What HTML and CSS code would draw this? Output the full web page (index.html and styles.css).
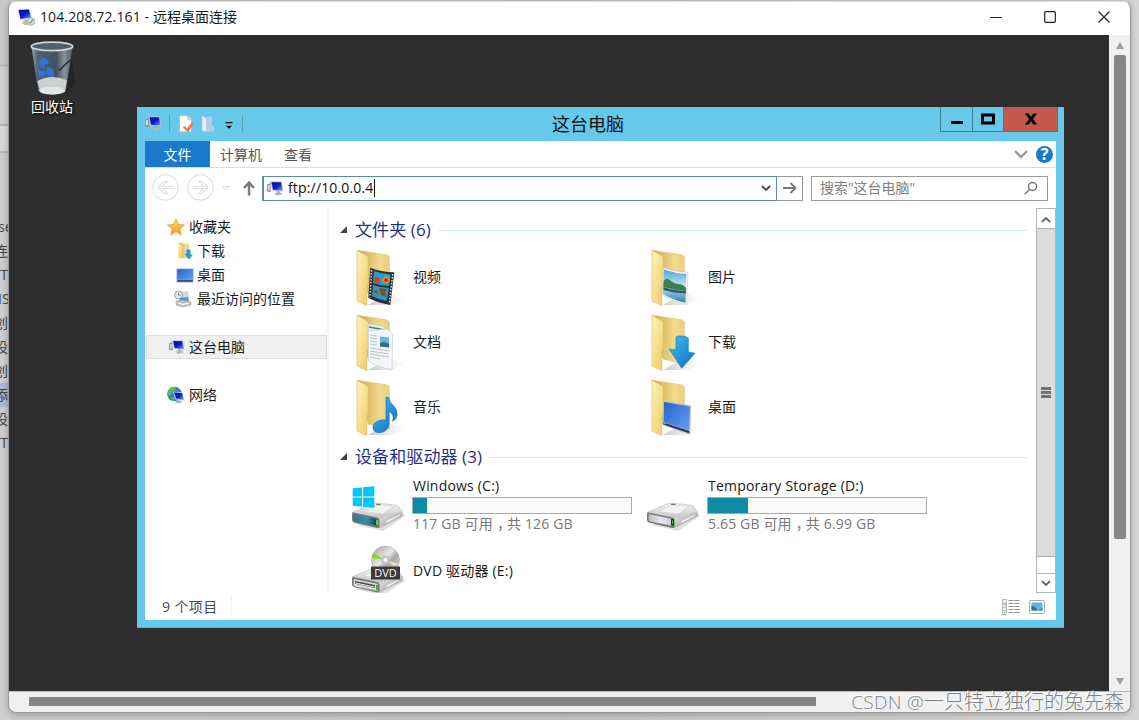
FILE: index.html
```html
<!DOCTYPE html>
<html lang="zh-CN">

<head>
	<meta charset="utf-8">
	<title>远程桌面连接</title>
	<link rel="stylesheet" href="styles.css">
</head>

<body>
	<!-- shared icons -->
	<svg class="sprite" width="0" height="0">
		<defs>
			<linearGradient id="flap" x1="0" y1="0" x2="1" y2="1">
				<stop offset="0" stop-color="#fff3bd" />
				<stop offset="1" stop-color="#eecb62" />
			</linearGradient>
			<linearGradient id="back" x1="0" y1="0" x2="1" y2="0">
				<stop offset="0" stop-color="#c9a552" />
				<stop offset=".7" stop-color="#f2da8c" />
				<stop offset="1" stop-color="#ead07f" />
			</linearGradient>
			<linearGradient id="shade" x1="0" y1="0" x2="1" y2="0">
				<stop offset="0" stop-color="#aaa" stop-opacity=".65" />
				<stop offset="1" stop-color="#ccc" stop-opacity="0" />
			</linearGradient>
			<linearGradient id="blue" x1="0" y1="0" x2="1" y2="1">
				<stop offset="0" stop-color="#49bdf0" />
				<stop offset="1" stop-color="#0a6fbd" />
			</linearGradient>
			<linearGradient id="screen" x1="0" y1="0" x2="1" y2="1">
				<stop offset="0" stop-color="#2a5fc4" />
				<stop offset="1" stop-color="#5fa4f8" />
			</linearGradient>
			<linearGradient id="monitor" x1="0" y1="0" x2="1" y2="1">
				<stop offset="0" stop-color="#0a10a0" />
				<stop offset=".5" stop-color="#0818c4" />
				<stop offset="1" stop-color="#6f9cf0" />
			</linearGradient>
			<linearGradient id="metal" x1="0" y1="0" x2="0" y2="1">
				<stop offset="0" stop-color="#f4f4f4" />
				<stop offset="1" stop-color="#c2c2c2" />
			</linearGradient>
			<linearGradient id="metalSide" x1="0" y1="0" x2="1" y2="1">
				<stop offset="0" stop-color="#f0f0f0" />
				<stop offset="1" stop-color="#8c8c8c" />
			</linearGradient>
			<linearGradient id="teal" x1="0" y1="0" x2="1" y2="0">
				<stop offset="0" stop-color="#3d6f8e" />
				<stop offset=".55" stop-color="#2796a6" />
				<stop offset="1" stop-color="#123348" />
			</linearGradient>
			<linearGradient id="silver" x1="0" y1="0" x2="1" y2="0">
				<stop offset="0" stop-color="#b9bac4" />
				<stop offset=".5" stop-color="#e6e6ee" />
				<stop offset="1" stop-color="#c8c9d4" />
			</linearGradient>
			<linearGradient id="disc" x1="0" y1="0" x2="1" y2="1">
				<stop offset="0" stop-color="#999" />
				<stop offset=".45" stop-color="#e8e8e8" />
				<stop offset=".6" stop-color="#aaa" />
				<stop offset="1" stop-color="#ddd" />
			</linearGradient>
			<linearGradient id="star" x1="0" y1="0" x2="0" y2="1">
				<stop offset="0" stop-color="#ffe36a" />
				<stop offset="1" stop-color="#f5922a" />
			</linearGradient>
			<linearGradient id="bin" x1="0" y1="0" x2="1" y2="0">
				<stop offset="0" stop-color="#a0a9b0" />
				<stop offset=".15" stop-color="#4f6272" />
				<stop offset=".6" stop-color="#42515e" />
				<stop offset=".8" stop-color="#8a9197" />
				<stop offset="1" stop-color="#565b60" />
			</linearGradient>
			<linearGradient id="sky" x1="0" y1="0" x2="0" y2="1">
				<stop offset="0" stop-color="#4d9fe0" />
				<stop offset=".5" stop-color="#c8e6f5" />
				<stop offset="1" stop-color="#2e7ea5" />
			</linearGradient>
		</defs>
		<symbol id="pc" viewBox="0 0 16 16">
			<path d="M0 4.500 3.500 2.500v9L0 10.500z" fill="#858b90" />
			<path d="M.8 5.200 2.800 4.300v5.300l-2 .2z" fill="#d9dcdf" />
			<path d="M3.300 1.200 13.900 1.400 15.400 10.800 5 10z" fill="#b9c4d8" />
			<path d="M4.200 2 13.200 2.200l1.300 7.700-8.700-.8z" fill="url(#monitor)" />
			<path d="M8.600 10.400l3.400.3.600 2-3.400-.4z" fill="#a5a9ad" />
			<path d="M6.600 12.400l6-.7 2.600 1.600-6 1.600z" fill="#b5b9bd" />
		</symbol>
		<symbol id="folder" viewBox="0 0 50 60">
			<path d="M12 57 33 45 50 51 36 57z" fill="url(#shade)" />
			<path d="M1 2.2 31.500 7 33.300 8.800V51L12 46z" fill="url(#back)" stroke="#dcc070" stroke-width=".6" />
			<path d="M1 2.200 11.400 8 12.300 10v26l-1.500 2v19.500L1 53z" fill="url(#flap)" stroke="#d8b85c" stroke-width=".6" />
		</symbol>
		<symbol id="drive" viewBox="0 0 56 50">
			<path d="M6 42 53 30 55 33 33 48z" fill="#999" opacity=".3" />
			<path d="M2 29.500 22 21q2-1 4-.9L45 22q2 .2 3.500 1.500L52.500 29 29.500 36z" fill="url(#metal)" stroke="#aaa" stroke-width=".5" />
			<path d="M13 28.500 28 22l16 1.500L33 31z" fill="#f3f3f3" stroke="#ccc" stroke-width=".5" />
			<path d="M26 20.800h4l1 1.200h-5z" fill="#777" />
			<path d="M29 35.500 52.500 29v4.200L31 44.800 28 45z" fill="url(#metalSide)" />
			<path d="M36 38 50 31.500v1L37 40z" fill="#eee" />
			<path d="M3.500 29.500 27 34.500q2.500.6 2.500 2.500v6.500q0 1.800-2.500 1.500L4.500 39.800Q2 39 2 37v-6q0-1.700 1.500-1.500z" fill="#777" />
		</symbol>
	</svg>

	<div class="background">
		<div class="outline">
			<span>se</span>
			<span class="shift">连接</span>
			<span class="half">FT</span>
			<span>IS</span>
			<span class="shift">创</span>
			<span class="shift">设</span>
			<span class="shift">创</span>
			<span class="shift current">添</span>
			<span class="shift">设</span>
			<span class="half">FT</span>
		</div>
	</div>

	<div class="rdp">
		<header class="rdp-title">
			<svg class="rdp-icon" viewBox="0 0 18 18">
				<path d="M.5 1 13 .5l2.500 10L3 12z" fill="#dde2ea" />
				<path d="M1.500 2 12 1.500l2 8L3.500 11z" fill="url(#monitor)" />
				<path d="M7 12l3-.5 1 2.500 3 1-5 2.500-4-2z" fill="#b9bdc1" />
				<circle cx="14" cy="13.500" r="3.800" fill="#d5dcd6" stroke="#9aa59c" stroke-width=".7" />
				<path d="M12 14l1.500 1L16 11.500" stroke="#3a9a48" fill="none" />
			</svg>
			<h1><span>104.208.72.161 - </span>远程桌面连接</h1>
			<div class="rdp-buttons">
				<svg viewBox="0 0 14 14"><path d="M1 7.500h12" /></svg>
				<svg viewBox="0 0 14 14"><rect x="1.700" y="1.700" width="10.600" height="10.600" rx="1" /></svg>
				<svg viewBox="0 0 14 14"><path d="M1.500 1.500l11 11M12.500 1.500l-11 11" /></svg>
			</div>
		</header>

		<div class="rdp-view">
			<div class="desktop">
				<div class="bin">
					<svg viewBox="0 0 48 58">
						<path d="M36 50 44 20l4 25-8 8z" fill="#111" opacity=".3" />
						<path d="M3 6 45 6 38 52q-14 6-28 0z" fill="url(#bin)" />
						<path d="M9 42q14-8 30-1l-2 12q-12 5-25 0z" fill="#cdd0d2" />
						<ellipse cx="24" cy="51.500" rx="13" ry="4" fill="#e5e5e5" />
						<path d="M31 31 43 20" stroke="#25303a" stroke-width="1.500" />
						<path d="M10 24l4-6 5 1 2 5-4 1-2 4zM20 27l4 2 3 7-5 2-2-3-3-1zM9 28l4 4 4-1-1 7-6-2z" fill="#2f73dc" />
						<ellipse cx="24" cy="6.500" rx="21" ry="4.300" fill="#51606c" stroke="#d3d6d8" stroke-width="1.800" />
					</svg>
					<p>回收站</p>
				</div>

				<div class="explorer">
					<div class="caption">
						<div class="quick">
							<svg class="icon16"><use href="#pc" /></svg>
							<i class="sep"></i>
							<svg class="quick-doc" viewBox="0 0 16 18">
								<path d="M1.500.8h8l4 4v12h-12z" fill="#fff" stroke="#a7b7c0" stroke-width=".7" />
								<path d="M9.500.8v4h4" fill="#ddd" stroke="#aaa" stroke-width=".5" />
								<path d="M5 12.500l2-1.500 2 2.500L14 7l1.500 2-5.500 8.500z" fill="#ec7b3f" />
							</svg>
							<svg class="quick-folder" viewBox="0 0 14 18">
								<path d="M4 2l7-.5v9l2 1v5L5 17z" fill="#b7cbe0" />
								<path d="M1 .8 5.500 3v14L1 15.500z" fill="#e4edf6" stroke="#a9bfd0" stroke-width=".5" />
							</svg>
							<svg class="quick-more" viewBox="0 0 8 8"><path d="M.5 0h7v1.200h-7zM1 3.800h6l-3 3z" /></svg>
							<i class="sep"></i>
						</div>
						<h2>这台电脑</h2>
						<div class="caption-buttons">
							<button class="min"><svg viewBox="0 0 14 12"><path d="M1 8h12v3H1z" /></svg></button>
							<button class="max"><svg viewBox="0 0 14 12"><path d="M0 .5h14v11H0zM3 3.500v5h8v-5z" fill-rule="evenodd" /></svg></button>
							<button class="close"><svg viewBox="0 0 14 12"><path d="M1 .5h3.700L7 3.800 9.300.5H13L9 6l4 5.500H9.300L7 8.200l-2.300 3.300H1L5 6z" /></svg></button>
						</div>
					</div>

					<div class="client">
						<nav class="ribbon">
							<a class="active">文件</a>
							<a>计算机</a>
							<a>查看</a>
							<div class="ribbon-right">
								<svg class="expand" viewBox="0 0 14 9"><path d="M1 1l6 6 6-6" /></svg>
								<span class="help">?</span>
							</div>
						</nav>

						<div class="address-row">
							<svg class="round" viewBox="0 0 26 26"><circle cx="13" cy="13" r="12.200" /><path d="M5.500 13l6.500-6h3l-5 5h9.500v2H10l5 5h-3z" /></svg>
							<svg class="round next" viewBox="0 0 26 26"><circle cx="13" cy="13" r="12.200" /><path d="M20.500 13 14 7h-3l5 5H6.500v2H16l-5 5h3z" /></svg>
							<svg class="history" viewBox="0 0 8 5"><path d="M.7.6h6.600L4 4.200z" /></svg>
							<svg class="up" viewBox="0 0 14 16"><path d="M7 15.500V3M2 8l5-5.500L12 8" /></svg>
							<div class="address">
								<svg class="icon16"><use href="#pc" /></svg>
								<span>ftp://10.0.0.4</span><i class="caret"></i>
								<svg class="drop" viewBox="0 0 10 7"><path d="M1 1l4 4 4-4" /></svg>
							</div>
							<div class="go"><svg viewBox="0 0 14 12"><path d="M0 6h12M7.500 1l5 5-5 5" /></svg></div>
							<div class="search">
								<span>搜索"这台电脑"</span>
								<svg viewBox="0 0 14 14"><circle cx="8.500" cy="5.500" r="4" /><path d="M5.500 8.500.8 13" /></svg>
							</div>
						</div>

						<div class="body">
							<ul class="tree">
								<li>
									<svg viewBox="0 0 18 18"><path d="M9 1l2.400 5.500 6 .5-4.600 4 1.500 6L9 13.800 3.700 17l1.500-6L.6 7l6-.5z" fill="url(#star)" stroke="#e39a2c" stroke-width=".8" /></svg>
									收藏夹
								</li>
								<li class="sub">
									<svg viewBox="0 0 18 18">
										<path d="M2 .8l11 1v15L6 16z" fill="url(#back)" />
										<path d="M2 .8l4 2.500v14L2 15.500z" fill="url(#flap)" />
										<path d="M10.500 7.500h4v5H17l-4 5-4.500-5.500h2z" fill="#2c97db" />
									</svg>
									下载
								</li>
								<li class="sub">
									<svg viewBox="0 0 18 18"><path d="M.5 2.500h17v14H.5z" fill="#8fa8c6" /><path d="M1.300 3.300h15.400v10.400H1.300z" fill="url(#screen)" /><path d="M1.300 14h15.400v1.700H1.300z" fill="#304e79" /></svg>
									桌面
								</li>
								<li class="sub recent">
									<svg viewBox="0 0 18 18">
										<path d="M5 2l9-1 1 7-9 1z" fill="#d3d8dc" />
										<circle cx="4.500" cy="5" r="4" fill="#e1e8ec" stroke="#9ba7ae" />
										<path d="M4.500 2.500V5h2" stroke="#66747c" fill="none" stroke-width=".8" />
										<path d="M5 8l9-1 1 5-8 1z" fill="#4d9bcd" />
										<path d="M2 11l7-1 8 2v3l-8 2-7-2z" fill="#bdc4c8" stroke="#8b9499" stroke-width=".5" />
										<path d="M4 13l5 1.500 6-1.500" stroke="#fff" fill="none" />
									</svg>
									最近访问的位置
								</li>
								<li class="selected">
									<svg class="small"><use href="#pc" /></svg>
									这台电脑
								</li>
								<li class="network">
									<svg viewBox="0 0 18 18">
										<circle cx="7.500" cy="8" r="7.300" fill="#3684c5" />
										<path d="M2 3.500Q5 0 9 1.500L8 4 5 5.500 4 9 1 10Q0 6 2 3.500zM3 12l4-1 1 4z" fill="#5dba54" />
										<path d="M6 5.500l9.500.7 2.200 8.500-9-1.200z" fill="#ccd8e8" />
										<path d="M7 6.500l8 .6 1.600 6.600-7.200-1z" fill="url(#monitor)" />
										<path d="M10 14l3.500.4 2 1.800-4 1.300-4-1.500z" fill="#b1b7bb" />
									</svg>
									网络
								</li>
							</ul>

							<main class="files">
								<h3><i class="tri"></i>文件夹 (6)</h3>
								<div class="grid folders">
									<div class="item">
										<svg class="folder" viewBox="0 0 50 60">
											<use href="#folder" />
											<path d="M14.300 19.700Q25 24 38.300 24.300L34.300 57Q22 55 12.300 50z" fill="#29313a" />
											<path d="M18 23q8 3 16.500 3.500L33 38q-9-.6-16-3z" fill="#2a9dd0" />
											<path d="M17 37q8 2.500 16 3L30.500 53Q23 52 16 48z" fill="#3c91b8" />
											<path d="M19 28l4 2 1 6-6-2z" fill="#d63f2d" />
											<circle cx="30" cy="32" r="3.800" fill="#e28622" />
											<circle cx="30" cy="32" r="1.500" fill="#5b2a18" />
											<path d="M23 40l8 1-2 3 1 5-5-2zM17 43l4-1 1 5z" fill="#77522a" />
											<path d="M15.600 22 14 49.500M36.700 26 33.300 55" stroke="#ddd" stroke-width="1.400" stroke-dasharray="1.600 1.400" fill="none" />
										</svg>
										<span>视频</span>
									</div>
									<div class="item">
										<svg class="folder" viewBox="0 0 50 60">
											<use href="#folder" />
											<path d="M12.300 19.700Q24 24 36.900 24.300L35.700 56.500Q23 54 11.500 47z" fill="#f4f6f8" stroke="#c5cbd0" stroke-width=".6" />
											<path d="M12.800 21.500Q24 25.500 35.300 25.900L34.400 54.700Q22 52 12.200 46z" fill="url(#sky)" />
											<path d="M12.600 33q3-4 6-1 5 4 9 4 4 0 7.500 4v3q-12-1-22.800-4z" fill="#3d7f48" />
											<path d="M12.500 39q11 4 22.300 4v2.500Q22 45 12.400 42z" fill="#216080" />
										</svg>
										<span>图片</span>
									</div>
									<div class="item">
										<svg class="folder" viewBox="0 0 50 60">
											<use href="#folder" />
											<path d="M12.300 11 27 13l6 6v27l-20-2z" fill="#e9eef3" stroke="#b9c1c9" stroke-width=".5" />
											<path d="M13 14l16 3" stroke="#338b85" stroke-width="1.300" />
											<path d="M12.300 18 31 16q3 1 5.700 5L36 57Q22 54 12.300 48z" fill="#f3f5fa" stroke="#c2c8d2" stroke-width=".6" />
											<path d="M24 23.500l9 1v10l-9-1z" fill="#69b4dd" />
											<path d="M24 30l4-1 5 2v3.500l-9-1z" fill="#356f78" />
											<path d="M14 22l7 1M14 25l7 1M14 28l7 1M14 31l7 1M14 35l19 3M14 38l19 3M14 41l19 3M14 44l10 2" stroke="#b4bcc9" stroke-width=".9" />
										</svg>
										<span>文档</span>
									</div>
									<div class="item">
										<svg class="folder" viewBox="0 0 50 60">
											<use href="#folder" />
											<path d="M25 24q2-1.500 5-1 5 0 7.300 2.300V39l6.700 1.300L30.700 55.300 18.300 36.300l6.700.5z" fill="url(#blue)" stroke="#1a7cbd" stroke-width=".7" />
										</svg>
										<span>下载</span>
									</div>
									<div class="item">
										<svg class="folder" viewBox="0 0 50 60">
											<use href="#folder" />
											<path d="M30 19.300h2.500q1 5 5 8.500 4.500 4.500 3.500 9.500-.7 4-4.500 6 2.500-6-3.500-10.300V46q-.5 6.500-7 8.300-8 1.500-9-4-.3-6 7-8 4-1 6 .2z" fill="url(#blue)" stroke="#1a76b5" stroke-width=".7" />
										</svg>
										<span>音乐</span>
									</div>
									<div class="item">
										<svg class="folder" viewBox="0 0 50 60">
											<use href="#folder" />
											<path d="M12 22.500 40 27.500 39.300 57 11.500 47z" fill="#b9c0c8" />
											<path d="M13 24 38.800 28.600 38.200 52.500 12.700 44z" fill="url(#screen)" />
											<path d="M12.500 44.500 38.200 53v2.300L12.300 46.500z" fill="#253a4f" />
											<circle cx="13.800" cy="45.500" r="1" fill="#6fc04a" />
										</svg>
										<span>桌面</span>
									</div>
								</div>

								<h3 class="second"><i class="tri"></i>设备和驱动器 (3)</h3>
								<div class="grid drives">
									<div class="item">
										<svg class="drive" viewBox="0 0 56 50">
											<use href="#drive" />
											<path d="M4 31l22 4.700q2 .5 2 2V43L5 38.500Q3.500 38 3.500 36z" fill="url(#teal)" />
											<path d="M26 36.500l2 .5v5.500l-2-.4z" fill="#49d332" />
											<path d="M2.700 5.300 12 4.400v9.200H2.700zM13 4.300l11.300-1v10.300H13zM2.700 14.500H12v9.200l-9.300-1zM13 14.500h11.300v10.300L13 23.800z" fill="#00c8f8" />
										</svg>
										<div class="info">
											<p>Windows (C:)</p>
											<div class="bar"><i style="width: 6.4%"></i></div>
											<p class="free">117 GB 可用<span class="comma">，</span>共 126 GB</p>
										</div>
									</div>
									<div class="item">
										<svg class="drive" viewBox="0 0 56 50">
											<use href="#drive" />
											<path d="M4 31l22 4.700q2 .5 2 2V43L5 38.500Q3.500 38 3.500 36z" fill="url(#silver)" />
											<path d="M26 36h3v7l-3-.6z" fill="#123d12" />
											<path d="M27 37.500h1v3.500h-1z" fill="#49d332" />
										</svg>
										<div class="info">
											<p>Temporary Storage (D:)</p>
											<div class="bar"><i style="width: 18.3%"></i></div>
											<p class="free">5.65 GB 可用<span class="comma">，</span>共 6.99 GB</p>
										</div>
									</div>
									<div class="item dvd">
										<svg class="drive" viewBox="0 0 56 50">
											<use href="#drive" y="2.500" height="50" width="56" />
											<path d="M4 34l22 4.500q2 .5 2 2V46L5 41.500Q3.500 41 3.500 39z" fill="#d9d9d9" />
											<path d="M5 36l20 4v3L5 38.700z" fill="#444" />
											<path d="M5.500 37.500l19 4v1l-19-4z" fill="#eee" />
											<path d="M26 40h2v5.500l-2-.4z" fill="#37b32a" />
											<circle cx="35.500" cy="15" r="14" fill="url(#disc)" stroke="#aaa" stroke-width=".5" />
											<path d="M35.500 15 22 13l1-5z" fill="#7be01e" />
											<path d="M35.500 15 49 19l-5 2z" fill="#f0dcae" />
											<circle cx="35.500" cy="15" r="4.500" fill="#c4c4c4" />
											<circle cx="35.500" cy="15" r="2" fill="#fff" />
											<rect x="21" y="21.500" width="29" height="13" fill="#3a3a3a" />
											<text x="35.500" y="32" text-anchor="middle" class="dvd-text">DVD</text>
										</svg>
										<span>DVD 驱动器 (E:)</span>
									</div>
								</div>
							</main>

							<div class="scroll">
								<div class="scroll-btn"><svg viewBox="0 0 10 7"><path d="M1 6l4-4 4 4" /></svg></div>
								<div class="scroll-thumb"><i></i><i></i><i></i></div>
								<div class="scroll-btn down"><svg viewBox="0 0 10 7"><path d="M1 1l4 4 4-4" /></svg></div>
							</div>
						</div>

						<footer class="status">
							<span>9 个项目</span>
							<svg class="view-list" viewBox="0 0 18 16">
								<path d="M.5.500h4v15h-4zM.5 4.200h4M.5 8h4M.5 11.800h4" fill="#eef3f5" stroke="#8ba1a5" stroke-width=".7" />
								<path d="M6.500 1.500h5M12.500 1.500h5M6.500 4.500h5M12.500 4.500h5M6.500 7.500h5M12.500 7.500h5M6.500 10.500h5M12.500 10.500h5M6.500 13.500h5M12.500 13.500h5" stroke="#8a90a0" />
								<path d="M2 5.500h1.500" stroke="#d55" /><path d="M2 13.500h1.500" stroke="#bb3" />
							</svg>
							<svg class="view-thumb" viewBox="0 0 16 14">
								<rect x=".5" y=".5" width="15" height="13" rx="1" fill="#fff" stroke="#9db0c0" />
								<path d="M2.500 2.500h11v8h-11z" fill="#5cb5e6" />
								<path d="M2.500 6q4 0 5 3t6-1v2.500h-11z" fill="#2b7867" />
							</svg>
						</footer>
					</div>
				</div>
			</div>

			<div class="vscroll">
				<i class="arrow-up"></i>
				<i class="vthumb"></i>
				<i class="arrow-down"></i>
			</div>
		</div>
		<div class="hscroll"><i></i></div>
	</div>

	<p class="watermark"><span>CSDN @</span>一只特立独行的兔先森</p>
</body>

</html>
```
FILE: styles.css
```css
/* common css */
* {
	margin: 0;
	padding: 0;
	box-sizing: border-box;
}

body {
	position: relative;
	width: 1139px;
	height: 720px;
	overflow: hidden;
	font-family: "Open Sans", "Noto Sans CJK SC", sans-serif;
	font-size: 14px;
	line-height: 20px;
	color: #1a1a1a;
	background: #c6c6c6;
}

svg {
	display: block;
	flex: none;
}

h1, h2, h3 {
	font-weight: normal;
}

.sprite {
	position: absolute;
}

.icon16 {
	width: 17px;
	height: 17px;
}

/* page behind the window */
.background {
	position: absolute;
	inset: 0;
	background: linear-gradient(90deg, #c9c9c9, #c2c2c2 50%, #d6d6d6);
}

.outline {
	width: 9px;
	height: 720px;
	padding-top: 215px;
	overflow: hidden;
	color: #454545;
	background: linear-gradient(#c9c9c9 64px, #b2b2b2 65px, #d0d0d0 67px, #d0d0d0 124px, #999 125px, #d8d8d8 126px, #d8d8d8 151px, #999 152px, #cdcdcd 153px);
}

.outline span {
	display: block;
	width: 40px;
	height: 24px;
	line-height: 24px;
	margin-left: -1px;
	text-indent: -1px;
	white-space: nowrap;
}

.outline .shift {
	text-indent: -5px;
}

.outline .half {
	text-indent: -6px;
}

.outline .current {
	background: #a9b9d3;
}

/* remote desktop window */
.rdp {
	position: absolute;
	left: 8px;
	top: 1px;
	width: 1123px;
	height: 712px;
	display: flex;
	flex-direction: column;
	border: 1px solid #999;
	border-top-color: #ddd;
	border-radius: 8px;
	background: #f0f0f0;
	overflow: hidden;
	box-shadow: 0 1px 6px rgba(0, 0, 0, .25);
}

.rdp-title {
	display: flex;
	align-items: center;
	height: 33px;
	padding: 0 19px 3px 8px;
	background: #fff;
}

.rdp-icon {
	width: 18px;
	height: 18px;
	margin-right: 5px;
}

.rdp-title h1 {
	font-size: 14px;
	flex: 1;
}

.rdp-title h1 span {
	letter-spacing: .12px;
}

.rdp-buttons {
	display: flex;
	gap: 40px;
}

.rdp-buttons svg {
	width: 14px;
	height: 14px;
	fill: none;
	stroke: #222;
	stroke-width: 1.2;
}

.rdp-view {
	display: flex;
	height: 656px;
}

.desktop {
	position: relative;
	width: 1101px;
	background: #2e2e2e;
}

.bin {
	position: absolute;
	left: 13px;
	top: 5px;
	width: 60px;
	color: #fff;
	text-align: center;
	text-shadow: 1px 1px 2px #000;
}

.bin svg {
	width: 48px;
	height: 57px;
	margin: 0 auto;
}

.vscroll {
	width: 21px;
	display: flex;
	flex-direction: column;
	align-items: center;
	padding-top: 7px;
}

.arrow-up, .arrow-down {
	border: 4.5px solid transparent;
	border-top: 0;
	border-bottom: 7px solid #a0a0a0;
}

.vthumb {
	width: 12px;
	height: 484px;
	margin: 6px 0 139px;
	border-radius: 2px;
	background: #858585;
}

.arrow-down {
	border-bottom: 0;
	border-top: 7px solid #a0a0a0;
}

.hscroll {
	height: 21px;
	padding: 5px 0 0 20px;
	border-top: 1px solid #bbb;
}

.hscroll i {
	display: block;
	width: 787px;
	height: 9px;
	background: #858585;
}

/* explorer window */
.explorer {
	position: absolute;
	left: 128px;
	top: 72px;
	width: 927px;
	height: 521px;
	padding: 0 8px 8px;
	background: #66c9ea;
	border-bottom: 1px solid #55b5d5;
}

.caption {
	display: grid;
	grid-template-columns: 407px 1fr auto;
	height: 34px;
}

.quick {
	display: flex;
	align-items: center;
	padding-bottom: 1px;
}

.quick .sep {
	width: 1px;
	height: 17px;
	background: #5c9db5;
}

.quick .icon16 {
	margin-right: 7px;
}

.quick-doc {
	width: 16px;
	height: 18px;
	margin: 0 7px 0 8px;
}

.quick-folder {
	width: 14px;
	height: 18px;
}

.quick-more {
	width: 8px;
	height: 8px;
	margin: 4px 9px 0 10px;
}

.caption h2 {
	font-size: 18px;
	line-height: 34px;
	color: #111;
}

.caption-buttons {
	display: flex;
	height: 25px;
	margin-right: -2px;
	border: 1px solid #3c7c93;
	border-top: 0;
}

.caption-buttons button {
	display: flex;
	align-items: center;
	justify-content: center;
	width: 31px;
	padding-bottom: 1px;
	border: 0;
	border-right: 1px solid #3c7c93;
	background: transparent;
}

.caption-buttons svg {
	width: 14px;
	height: 12px;
}

.caption-buttons .min {
	width: 32px;
}

.caption-buttons .close {
	width: 53px;
	border-right: 0;
	background: #c1594f;
}

.client {
	height: 479px;
	background: #fff;
	display: flex;
	flex-direction: column;
}

/* tabs */
.ribbon {
	display: flex;
	height: 27px;
	line-height: 27px;
	border-bottom: 1px solid #dcdcdc;
	color: #555;
}

.ribbon a {
	margin-left: 22px;
}

.ribbon .active {
	width: 65px;
	margin: 0 -12px 0 0;
	text-align: center;
	color: #fff;
	background: #1979ca;
}

.ribbon-right {
	display: flex;
	align-items: center;
	gap: 8px;
	margin-left: auto;
	padding-right: 3px;
}

.expand {
	width: 14px;
	height: 9px;
	fill: none;
	stroke: #999;
	stroke-width: 2.4;
}

.help {
	width: 17px;
	height: 17px;
	border-radius: 50%;
	font-size: 16px;
	font-weight: bold;
	line-height: 17px;
	text-align: center;
	color: #fff;
	background: #1979ca;
}

/* address bar */
.address-row {
	display: flex;
	align-items: center;
	height: 40px;
	padding: 0 8px 0 7px;
}

.round {
	width: 27px;
	height: 27px;
	margin-top: -1px;
	fill: none;
	stroke: #dedede;
}

.next {
	margin-left: 8px;
}

.history {
	width: 8px;
	height: 5px;
	margin: 0 12px 0 8px;
	fill: none;
	stroke: #ddd;
}

.up {
	width: 14px;
	height: 16px;
	margin: 0 8px 1px 0;
	fill: none;
	stroke: #7a7a7a;
	stroke-width: 2.5;
}

.address {
	display: flex;
	align-items: center;
	width: 515px;
	height: 25px;
	padding: 0 5px 0 3px;
	border: 2px solid #5c8cab;
	border-width: 1px 1px 1px 2px;
	margin-left: -2px;
	color: #111;
}

.address span {
	margin-left: 4px;
	letter-spacing: .16px;
}

.caret {
	width: 1px;
	height: 18px;
	background: #111;
}

.drop {
	width: 10px;
	height: 7px;
	margin-left: auto;
	fill: none;
	stroke: #444;
	stroke-width: 1.8;
}

.go {
	display: flex;
	align-items: center;
	justify-content: center;
	width: 26px;
	height: 25px;
	border: 1px solid #999;
	border-left: 0;
}

.go svg {
	width: 14px;
	height: 12px;
	fill: none;
	stroke: #777;
	stroke-width: 1.8;
}

.search {
	display: flex;
	align-items: center;
	justify-content: space-between;
	flex: 1;
	height: 25px;
	margin-left: 8px;
	padding: 0 9px 0 8px;
	border: 1px solid #999;
	color: #808080;
}

.search svg {
	width: 14px;
	height: 14px;
	fill: none;
	stroke: #777;
	stroke-width: 1.5;
}

/* body */
.body {
	display: flex;
	height: 385px;
	overflow: hidden;
}

.tree {
	width: 184px;
	padding: 7px 0 0 1px;
	list-style: none;
	border-right: 2px solid #f6f6f6;
}

.tree li {
	display: flex;
	align-items: center;
	height: 24px;
	padding-left: 21px;
	white-space: nowrap;
}

.tree svg {
	width: 18px;
	height: 18px;
	margin-right: 4px;
}

.tree .small {
	width: 16px;
	height: 16px;
	margin: 0 4px 0 2px;
}

.tree .sub {
	padding-left: 30px;
}

.tree .sub svg {
	margin-right: 3px;
}

.tree .recent {
	padding-left: 28px;
}

.tree .recent svg {
	margin-right: 5px;
}

.tree .selected {
	margin: 24px 0;
	padding-left: 20px;
	background: #f0f0f0;
	border: 1px solid #dedede;
}

.files {
	flex: 1;
	padding: 10px 8px 0 11px;
}

.files h3 {
	display: flex;
	align-items: center;
	height: 24px;
	font-size: 17px;
	letter-spacing: .1px;
	color: #1e3287;
	white-space: nowrap;
}

.files h3::after {
	content: "";
	flex: 1;
	height: 1px;
	margin-left: 8px;
	background: #d5e5f3;
}

.tri {
	margin: 0 8px 2px 0;
	border-left: 7px solid transparent;
	border-bottom: 7px solid #444;
}

.grid {
	display: grid;
	grid-template-columns: 295px 295px;
}

.folders {
	grid-auto-rows: 65px;
	margin-top: 3px;
}

.item {
	display: flex;
	align-items: center;
}

.item > span {
	padding-bottom: 1px;
}

.folder {
	width: 50px;
	height: 60px;
	margin: 0 7px 0 16px;
}

.second {
	margin-top: 5px;
}

.drives {
	grid-auto-rows: 62px;
	margin-top: 7px;
}

.drives .item {
	align-items: flex-start;
}

.drive {
	width: 56px;
	height: 50px;
	margin: 7px 6px 0 10px;
}

.dvd span {
	margin-top: 23px;
	letter-spacing: .2px;
}

.dvd .drive {
	margin-right: 7px;
}

.dvd-text {
	font-size: 11px;
	fill: #fff;
}

.info p {
	height: 20px;
	margin-left: 1px;
	letter-spacing: .2px;
}

.info .bar {
	width: 220px;
	height: 17px;
	margin: 1px 0 0;
	border: 1px solid #aaa;
	background: #fafafa;
}

.bar i {
	display: block;
	height: 100%;
	background: #118aa8;
}

.info .free {
	color: #777;
	letter-spacing: .15px;
}

.comma {
	padding-left: 4px;
	margin-right: -4px;
}

.scroll {
	display: flex;
	flex-direction: column;
	width: 20px;
	height: 385px;
	border: 1px solid #b5b5b5;
}

.scroll-btn {
	display: flex;
	align-items: center;
	justify-content: center;
	height: 19px;
	padding-top: 2px;
}

.scroll-btn svg {
	width: 10px;
	height: 7px;
	fill: none;
	stroke: #666;
	stroke-width: 1.8;
}

.scroll-thumb {
	display: flex;
	flex-direction: column;
	align-items: center;
	justify-content: center;
	gap: 1px;
	height: 329px;
	margin-bottom: 16px;
	background: #dcdcdc;
	border: 1px solid #b0b0b0;
	border-width: 1px 0;
}

.scroll-thumb i {
	width: 10px;
	height: 3px;
	background: #707070;
}

.down {
	border-top: 1px solid #b5b5b5;
	padding-top: 0;
}

.status {
	display: flex;
	align-items: center;
	flex: 1;
	padding: 0 11px 0 17px;
	color: #3d4b66;
}

.status span {
	padding-right: 13px;
	border-right: 1px solid #eee;
	letter-spacing: .4px;
}

.view-list {
	width: 18px;
	height: 16px;
	margin-left: auto;
}

.view-thumb {
	width: 16px;
	height: 14px;
	margin-left: 9px;
}

.watermark {
	position: absolute;
	right: 15px;
	bottom: 5px;
	font-size: 20px;
	font-weight: 300;
	line-height: 26px;
	white-space: nowrap;
	color: #808080;
	text-shadow: -1px -1px 0 #fff;
}

.watermark span {
	font-size: 19px;
	letter-spacing: .3px;
}
```
